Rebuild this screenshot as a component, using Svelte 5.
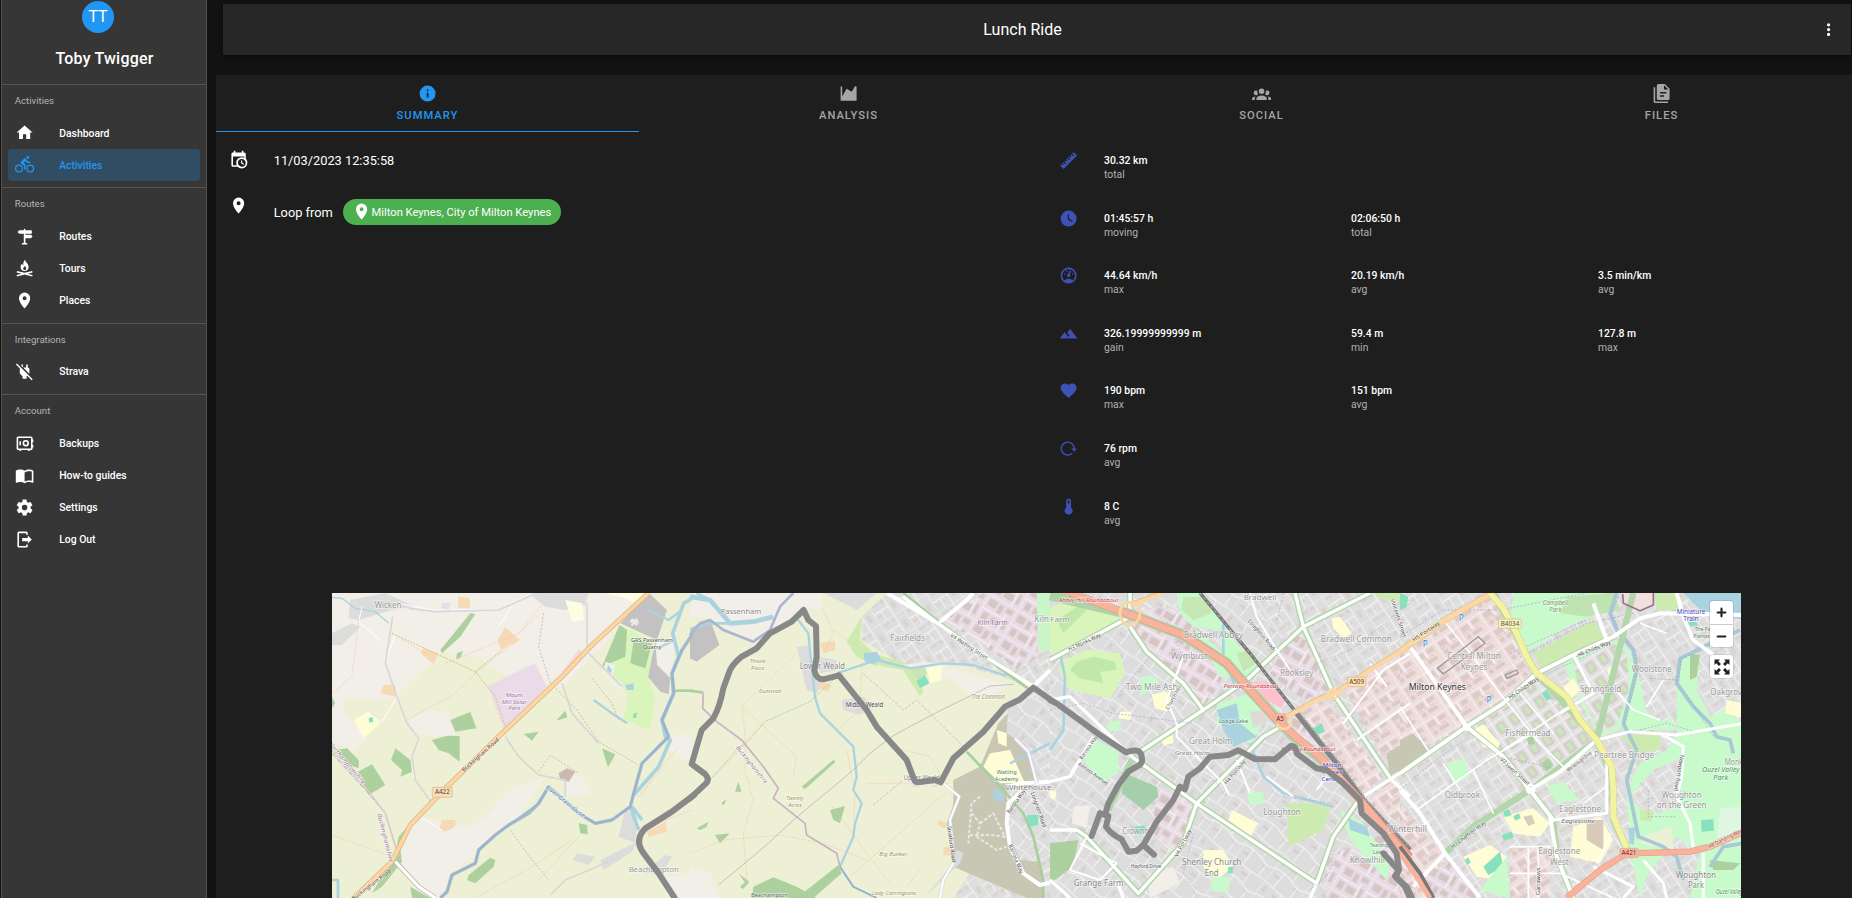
<script>
  const P = {
    home: 'M10,20V14H14V20H19V12H22L12,3L2,12H5V20H10Z',
    bike: 'M5,20.5A3.5,3.5 0 0,1 1.5,17A3.5,3.5 0 0,1 5,13.5A3.5,3.5 0 0,1 8.5,17A3.5,3.5 0 0,1 5,20.5M5,12A5,5 0 0,0 0,17A5,5 0 0,0 5,22A5,5 0 0,0 10,17A5,5 0 0,0 5,12M14.8,10H19V8.2H15.8L13.86,4.93C13.57,4.43 13,4.1 12.4,4.1C11.93,4.1 11.5,4.29 11.2,4.6L7.5,8.29C7.19,8.6 7,9 7,9.5C7,10.13 7.33,10.66 7.85,10.97L11.2,13V18H13V11.5L10.75,9.85L13.07,7.5M19,20.5A3.5,3.5 0 0,1 15.5,17A3.5,3.5 0 0,1 19,13.5A3.5,3.5 0 0,1 22.5,17A3.5,3.5 0 0,1 19,20.5M19,12A5,5 0 0,0 14,17A5,5 0 0,0 19,22A5,5 0 0,0 24,17A5,5 0 0,0 19,12M16,4.8C17,4.8 17.8,4 17.8,3C17.8,2 17,1.2 16,1.2C15,1.2 14.2,2 14.2,3C14.2,4 15,4.8 16,4.8Z',
    sign: 'M11,4V3L12,2L13,3V4H21V8.500H13V9.800H20L22,12L20,14.200H13V20H14.5C15.3,20 15.5,21 15.5,22H8.5C8.5,21 8.7,20 9.500,20H11V8.500H5.500L3,6.300L5.500,4H11Z',
    fire: 'M12.500,1C13,4 17,5.800 17,10C17,13 14.800,15 12,15C9,15 7,13 7,10C7,8 8,6.600 9,5.600C9.100,7 9.600,7.600 10.300,7.800C10.200,5 11,2.500 12.500,1M12.400,8.500C12,10 10.200,10.500 10.200,12C10.200,13.100 11,13.800 12,13.800C13.200,13.800 14,13 14,11.800C14,10.500 12.800,9.800 12.400,8.500M2.500,15L12,17.300L21.500,15L22,16.900L15.800,18.300L22,19.900L21.500,21.800L12,19.400L2.500,21.800L2,19.900L8.200,18.300L2,16.900Z',
    pin: 'M12,11.5A2.5,2.5 0 0,1 9.5,9A2.5,2.5 0 0,1 12,6.5A2.5,2.5 0 0,1 14.5,9A2.5,2.5 0 0,1 12,11.5M12,2A7,7 0 0,0 5,9C5,14.25 12,22 12,22C12,22 19,14.25 19,9A7,7 0 0,0 12,2Z',
    plug: 'M22.11 21.46L2.39 1.73L1.11 3L6.25 8.14C6.09 8.41 6 8.7 6 9V14.5L9.5 18V21H14.5V18L15.31 17.2L20.84 22.73L22.11 21.46M18 14.5V9C18 8 17 7 16 7V3H14V7H10.2L17.85 14.65L18 14.5M10 3H8V4.8L10 6.8V3Z',
    safe: 'M4,3H20A2,2 0 0,1 22,5V7H23V10H22V14H23V17H22V18A2,2 0 0,1 20,20H19V21H16V20H8V21H5V20H4A2,2 0 0,1 2,18V5A2,2 0 0,1 4,3M4,5V18H20V5H4M5.500,9H7.500V14H5.500V9M13.500,7.500A4,4 0 0,1 17.500,11.500A4,4 0 0,1 13.500,15.500A4,4 0 0,1 9.500,11.500A4,4 0 0,1 13.500,7.500M13.500,9.500A2,2 0 0,0 11.500,11.500A2,2 0 0,0 13.500,13.500A2,2 0 0,0 15.500,11.500A2,2 0 0,0 13.500,9.500Z',
    book: 'M12 21.5C10.65 20.65 8.2 20 6.5 20C4.85 20 3.15 20.3 1.75 21.05C1.65 21.1 1.6 21.1 1.5 21.1C1.25 21.1 1 20.85 1 20.6V6C1.6 5.55 2.25 5.25 3 5C4.11 4.65 5.33 4.5 6.5 4.5C8.45 4.5 10.55 4.9 12 6C13.45 4.9 15.55 4.5 17.5 4.5C18.67 4.5 19.89 4.65 21 5C21.75 5.25 22.4 5.55 23 6V20.6C23 20.85 22.75 21.1 22.5 21.1C22.4 21.1 22.35 21.1 22.25 21.05C20.85 20.3 19.15 20 17.5 20C15.8 20 13.35 20.65 12 21.5M12 8V19.5C13.35 18.65 15.8 18 17.5 18C18.7 18 19.9 18.15 21 18.5V7C19.9 6.65 18.7 6.5 17.5 6.5C15.8 6.5 13.35 7.15 12 8Z',
    cog: 'M12,15.5A3.5,3.5 0 0,1 8.5,12A3.5,3.5 0 0,1 12,8.5A3.5,3.5 0 0,1 15.5,12A3.5,3.5 0 0,1 12,15.5M19.43,12.97C19.47,12.65 19.5,12.33 19.5,12C19.5,11.67 19.47,11.34 19.43,11L21.54,9.37C21.73,9.22 21.78,8.95 21.66,8.73L19.66,5.27C19.54,5.05 19.27,4.96 19.05,5.05L16.56,6.05C16.04,5.66 15.5,5.32 14.87,5.07L14.5,2.42C14.46,2.18 14.25,2 14,2H10C9.75,2 9.54,2.18 9.5,2.42L9.13,5.07C8.5,5.32 7.96,5.66 7.44,6.05L4.95,5.05C4.73,4.96 4.46,5.05 4.34,5.27L2.34,8.73C2.21,8.95 2.27,9.22 2.46,9.37L4.57,11C4.53,11.34 4.5,11.67 4.5,12C4.5,12.33 4.53,12.65 4.57,12.97L2.46,14.63C2.27,14.78 2.21,15.05 2.34,15.27L4.34,18.73C4.46,18.95 4.73,19.03 4.95,18.95L7.44,17.94C7.96,18.34 8.5,18.68 9.13,18.93L9.5,21.58C9.54,21.82 9.75,22 10,22H14C14.25,22 14.46,21.82 14.5,21.58L14.87,18.93C15.5,18.67 16.04,18.34 16.56,17.94L19.05,18.95C19.27,19.03 19.54,18.95 19.66,18.73L21.66,15.27C21.78,15.05 21.73,14.78 21.54,14.63L19.43,12.97Z',
    logout: 'M16,17V14H9V10H16V7L21,12L16,17M14,2A2,2 0 0,1 16,4V6H14V4H5V20H14V18H16V20A2,2 0 0,1 14,22H5A2,2 0 0,1 3,20V4A2,2 0 0,1 5,2H14Z',
    info: 'M13,9H11V7H13M13,17H11V11H13M12,2A10,10 0 0,0 2,12A10,10 0 0,0 12,22A10,10 0 0,0 22,12A10,10 0 0,0 12,2Z',
    chart: 'M2,3H4V15.500L9.500,6L16,9.800L20.200,2.500L22,3.500V21H2V3Z',
    group: 'M12,5.5A3.5,3.5 0 0,1 15.5,9A3.5,3.5 0 0,1 12,12.5A3.5,3.5 0 0,1 8.5,9A3.5,3.5 0 0,1 12,5.5M5,8C5.56,8 6.08,8.15 6.53,8.42C6.38,9.85 6.8,11.27 7.66,12.38C7.16,13.34 6.16,14 5,14A3,3 0 0,1 2,11A3,3 0 0,1 5,8M19,8A3,3 0 0,1 22,11A3,3 0 0,1 19,14C17.84,14 16.84,13.34 16.34,12.38C17.2,11.27 17.62,9.85 17.47,8.42C17.92,8.15 18.44,8 19,8M5.5,18.25C5.5,16.18 8.41,14.5 12,14.5C15.59,14.5 18.5,16.18 18.5,18.25V20H5.5V18.25M0,20V18.5C0,17.11 1.89,15.94 4.45,15.6C3.86,16.28 3.5,17.22 3.5,18.25V20H0M24,20H20.5V18.25C20.5,17.22 20.14,16.28 19.55,15.6C22.11,15.94 24,17.11 24,18.5V20Z',
    files: 'M16 0H8C6.9 0 6 .9 6 2V18C6 19.1 6.9 20 8 20H20C21.1 20 22 19.1 22 18V6L16 0M15 16H10V14H15V16M18 12H10V10H18V12M15 7V1.5L20.5 7H15M4 4V22H20V24H4C2.9 24 2 23.1 2 22V4H4Z',
    calendar: 'M15,13H16.5V15.82L18.94,17.23L18.19,18.53L15,16.69V13M19,8H5V19H9.67C9.24,18.09 9,17.07 9,16A7,7 0 0,1 16,9C17.07,9 18.09,9.24 19,9.67V8M5,21C3.89,21 3,20.1 3,19V5C3,3.89 3.89,3 5,3H6V1H8V3H16V1H18V3H19A2,2 0 0,1 21,5V11.1C22.24,12.36 23,14.09 23,16A7,7 0 0,1 16,23C14.09,23 12.36,22.24 11.1,21H5M16,11.15A4.85,4.85 0 0,0 11.15,16C11.15,18.68 13.32,20.85 16,20.85A4.85,4.85 0 0,0 20.85,16C20.85,13.32 18.68,11.15 16,11.15Z',
    ruler: 'M1.39,18.36L3.16,16.6L4.58,18L5.64,16.95L4.22,15.54L5.64,14.12L8.11,16.6L9.17,15.54L6.7,13.06L8.11,11.65L9.53,13.06L10.59,12L9.17,10.59L10.59,9.17L13.06,11.65L14.12,10.59L11.65,8.11L13.06,6.7L14.47,8.11L15.54,7.05L14.12,5.64L15.54,4.22L18,6.7L19.07,5.64L16.6,3.16L18.36,1.39L22.61,5.64L5.64,22.61L1.39,18.36Z',
    clock: 'M12,2A10,10 0 0,0 2,12A10,10 0 0,0 12,22A10,10 0 0,0 22,12A10,10 0 0,0 12,2M16.2,16.2L11,13V7H12.5V12.2L17,14.9L16.2,16.2Z',
    gauge: 'M12,2A10,10 0 0,0 2,12A10,10 0 0,0 12,22A10,10 0 0,0 22,12A10,10 0 0,0 12,2M12,4A8,8 0 0,1 20,12C20,14.4 19,16.5 17.3,18C15.9,16.7 14,16 12,16C10,16 8.2,16.7 6.7,18C5,16.5 4,14.4 4,12A8,8 0 0,1 12,4M14,5.89C13.62,5.9 13.26,6.15 13.1,6.54L11.81,9.77L11.71,10C11,10.13 10.41,10.6 10.14,11.26C9.73,12.29 10.23,13.45 11.26,13.86C12.29,14.27 13.45,13.77 13.86,12.74C14.12,12.08 14,11.32 13.57,10.76L13.67,10.5L14.96,7.29L14.97,7.26C15.17,6.75 14.92,6.17 14.41,5.96C14.28,5.91 14.15,5.89 14,5.89M10,6A1,1 0 0,0 9,7A1,1 0 0,0 10,8A1,1 0 0,0 11,7A1,1 0 0,0 10,6M7,9A1,1 0 0,0 6,10A1,1 0 0,0 7,11A1,1 0 0,0 8,10A1,1 0 0,0 7,9M17,9A1,1 0 0,0 16,10A1,1 0 0,0 17,11A1,1 0 0,0 18,10A1,1 0 0,0 17,9Z',
    hills: 'M14,6L10.25,11L13.1,14.8L11.5,16C9.81,13.75 7,10 7,10L1,18H23L14,6Z',
    heart: 'M12,21.35L10.55,20.03C5.4,15.36 2,12.27 2,8.5C2,5.41 4.42,3 7.5,3C9.24,3 10.91,3.81 12,5.08C13.09,3.81 14.76,3 16.5,3C19.58,3 22,5.41 22,8.5C22,12.27 18.6,15.36 13.45,20.03L12,21.35Z',
    cadence: 'M11,3A9,9 0 0,1 19.900,12H22.500L19,16L15.300,12H18.100A7.200,7.200 0 1,0 15.800,17.300L17.100,18.600A9,9 0 1,1 11,3Z',
    thermo: 'M15,13V5A3,3 0 0,0 9,5V13A5,5 0 1,0 15,13M12,4A1,1 0 0,1 13,5V8H11V5A1,1 0 0,1 12,4Z',
    dots: 'M12,16A2,2 0 1,1 12,20A2,2 0 1,1 12,16M12,10A2,2 0 1,1 12,14A2,2 0 1,1 12,10M12,4A2,2 0 1,1 12,8A2,2 0 1,1 12,4Z'
  };

  const nav = [
    { title: 'Activities', items: [['Dashboard', 'home'], ['Activities', 'bike', true]] },
    { title: 'Routes', items: [['Routes', 'sign'], ['Tours', 'fire'], ['Places', 'pin']] },
    { title: 'Integrations', items: [['Strava', 'plug']] },
    { title: 'Account', items: [['Backups', 'safe'], ['How-to guides', 'book'], ['Settings', 'cog'], ['Log Out', 'logout']] }
  ];
  const tabs = [['Summary', 'info'], ['Analysis', 'chart'], ['Social', 'group'], ['Files', 'files']];
  const stats = [
    ['ruler', [['30.32 km', 'total']]],
    ['clock', [['01:45:57 h', 'moving'], ['02:06:50 h', 'total']]],
    ['gauge', [['44.64 km/h', 'max'], ['20.19 km/h', 'avg'], ['3.5 min/km', 'avg']]],
    ['hills', [['326.19999999999 m', 'gain'], ['59.4 m', 'min'], ['127.8 m', 'max']]],
    ['heart', [['190 bpm', 'max'], ['151 bpm', 'avg']]],
    ['cadence', [['76 rpm', 'avg']]],
    ['thermo', [['8 C', 'avg']]]
  ];

  // Map is drawn in four west-to-east sheets; each sheet keeps its own origin.
  const sheets = [
    {
      x: 0,
      areas: [
        ['#f2efe9', '0,9 960,9 800,180 690,290 650,290 610,220 530,260 440,200 330,185 180,330 30,325 40,375 110,440 60,490 0,450'],
        ['#f2efe9', '225,390 290,360 350,365 375,435 300,440 250,425'],
        ['#f2efe9', '265,680 410,715 460,680 530,600 640,560 560,680 480,735 440,790 355,850 330,924 300,924 200,815 230,730'],
        ['#f2efe9', '700,570 740,545 780,610 700,620'],
        ['#f2efe9', '975,150 1030,150 1020,260 970,220'],
        ['#f2efe9', '1010,440 1080,430 1080,520 1010,480'],
        ['#dddcdc', '0,130 60,100 85,110 30,165 0,165'], ['#dddcdc', '55,30 160,9 250,50 180,60 80,90 50,85'],
        ['#dddcdc', '590,9 770,9 760,45 700,60 640,50'],
        ['#fefde0', '700,30 750,40 757,90 720,97'], ['#fefde0', '820,9 940,9 905,38 880,25'],
        ['#c4c1c2', '950,9 1005,60 975,150 865,100'], ['#c4c1c2', '970,150 975,225 1015,265 1010,313 985,305 948,260'],
        ['#d9f5bb', '865,105 965,155 948,260 970,320 955,420 875,390 890,310 810,235'],
        ['#add19e', '862,105 885,120 880,200 810,230'], ['#add19e', '905,150 960,160 940,235 895,220'],
        ['#f2efe9', '820,215 850,225 840,270 870,275 875,300 845,285 815,250'], ['#aad3df', '880,285 905,280 905,300 885,300'], ['#aad3df', '828,225 840,240 835,250 825,240'], ['#88e0be', '905,370 915,368 912,385 903,383'],
        ['#add19e', '415,70 430,72 385,140 330,190 325,180'], ['#add19e', '375,190 393,183 385,205 372,208'],
        ['#f6d9b5', '378,18 413,25 413,55 378,53'], ['#f6d9b5', '520,112 563,150 508,180 497,150'],
        ['#f6d9b5', '275,175 320,190 305,222 265,190'], ['#f6d9b5', '155,285 190,285 192,320 145,310'],
        ['#f6d9b5', '330,690 370,690 370,710 340,725 322,715'],
        ['#ebdbe8', '330,38 356,40 350,65 328,58'], ['#ebdbe8', '468,288 608,220 645,290 515,418'],
        ['#f4dadb', '740,178 755,185 700,250 690,245'],
        ['#fefdd5', '65,390 110,365 145,400 95,443'], ['#88e0be', '110,385 122,380 124,395 112,398'],
        ['#add19e', '355,390 415,366 433,415 370,425'], ['#add19e', '300,450 345,437 383,438 383,515 350,490 320,480'],
        ['#add19e', '190,475 235,510 240,545 205,560 210,540 177,510'], ['#add19e', '15,480 45,475 80,510 80,535 50,525'],
        ['#add19e', '78,545 120,523 160,585 110,615'], ['#add19e', '672,392 700,362 706,382'],
        ['#add19e', '575,432 620,425 600,452'], ['#add19e', '810,475 850,493 828,532'],
        ['#add19e', '235,700 205,780 210,815 150,890 120,910 190,790 200,740'], ['#add19e', '410,855 475,803 490,810 485,830 430,880 405,870'],
        ['#add19e', '740,700 765,705 767,733 745,730'], ['#add19e', '0,320 10,340 0,355'], ['#add19e', '235,890 295,924 240,924'],
        ['#dddcdc', '880,660 915,680 910,760 860,740'], ['#dddcdc', '805,810 915,755 900,785 815,840'],
        ['#dddcdc', '735,790 790,800 770,825 722,810'], ['#f6d9b5', '945,725 1000,695 1005,725 950,740'],
        ['#c9b9b0', '680,550 705,535 730,545 710,575 685,570'],
        ['#dddcdc', '930,850 1000,795 1020,800 990,850'], ['#f2efe9', '1000,860 1080,855 1080,924 1000,924']
      ],
      lines: [
        ['#aad3df', 4, 'M0,22 30,25 70,55 130,65 170,100'], ['#aad3df', 8, 'M0,870H18V924'],
        ['#fff', 3, 'M90,50 80,95 150,155M190,130 160,220 195,320 225,400 260,440 240,500 245,560 300,640M195,320 150,395 100,370M600,9 500,60 300,60 200,40M500,110 540,50M265,680 330,720'],
        ['#d9d6d6', 5, 'M182,80 160,220 195,320 225,400 260,445 240,500 250,570 300,640M230,55 310,65 500,60 600,15M520,440 560,500 620,555 700,570M770,190 840,260 870,290M765,40 765,180M690,280 720,370 800,460M700,570 700,620M655,915 700,870 830,815'],
        ['#f4c3b3', 3, 'M80,90 60,260 0,310M180,130 280,190M560,150 440,240 370,310 225,390M560,130 625,70M640,30 560,130 340,220M930,620 1010,470M920,620 1000,520 1040,470M900,730 1080,660M720,750 600,830 430,924M0,735 180,800M740,740 620,870M950,700 1080,610', '3 4'],
        ['#c6bfb8', 3, 'M635,70 620,170 655,280M655,280 735,360 800,455 920,525M620,545 655,495 740,550M780,265 840,340 860,390M535,720 600,810 650,870', '6 5'],
        ['#d9c36c', 3, 'M430,245 490,320 520,410M180,130 430,245 510,180', '6 4'],
        ['#add19e', 8, 'M1020,302H1080'],
        ['#aad3df', 7, 'M785,330 840,370 885,400M950,60 1010,90 1050,60M975,175 1030,150'],
        ['#aad3df', 11, 'M1080,25 1055,40 1022,130 1040,200 1020,250 1025,310 990,390 1000,440 1015,450 980,530 905,615M895,650 920,720M900,650 930,690'],
        ['#a9b6ce', 10, 'M1080,135 1050,180 1020,250 1025,310 990,390 1010,440 930,520 905,610 895,650 840,690 790,700 740,670 650,590 620,640 590,670 530,705 490,735 440,780 430,820 360,855 345,905 325,924'],
        ['#8fb8cf', 4, 'M1050,180 1020,250 1025,310 990,390 1010,440 930,520 905,610 895,650 840,690 790,700 740,670 650,590 620,640 530,705 490,735 440,780 430,820 360,855 345,905 325,924'],
        ['#a99dab', 3, 'M0,490 110,610 160,670 200,800', '14 4 3 4'], ['#d9cbd5', 5, 'M0,480 110,605 160,670 200,800'],
        ['#b6aba4', 14, 'M190,815 260,890 310,924'], ['#fff', 10, 'M190,815 260,890 310,924'],
        ['#d9b078', 15, 'M950,9 780,165 690,260 500,440 330,605 235,705 180,815 65,924'],
        ['#fcd6a4', 11, 'M950,9 780,165 690,260 500,440 330,605 235,705 180,815 65,924']
      ],
      labels: [
        [168, 53, 'Wicken', 25, '#999', 0, 80], [960, 155, 'GRS Passenham', 18, '#555', 0, 126], [960, 176, 'Quarry', 18, '#555', 0, 56],
        [547, 320, 'Mount', 18, '#a070a0', 0, 52, 1], [547, 341, 'Mill Solar', 18, '#a070a0', 0, 76, 1], [547, 361, 'Park', 18, '#a070a0', 0, 36, 1],
        [445, 500, 'Buckingham Road', 17, '#5b3f1c', -42, 142], [118, 890, 'Buckingham Road', 17, '#5b3f1c', -37, 142],
        [45, 525, 'Northamptonshire', 18, '#a080a0', 50, 160, 1], [160, 750, 'Buckinghamshire', 18, '#a080a0', 76, 150, 1],
        [700, 640, 'River Great Ouse', 17, '#5d84b5', 38, 145, 1], [965, 845, 'Beachampton', 23, '#999', 0, 150], [905, 104, '⚒', 24, '#eee', 0, 24]
      ],
      shields: [[301, 592, 60, 30, 'A422', '#f8deba', '#5b3f1c']]
    },
    {
      x: 1074,
      areas: [
        ['#f2efe9', '0,9 400,9 390,60 340,50 240,130 200,160 130,130 80,95 0,60'], ['#c4c1c2', '0,115 60,88 88,165 20,215 0,205'],
        ['#f2efe9', '0,830 60,850 90,924 0,924'],
        ['#f2efe9', '0,9 0,80 60,85 190,155 200,120 100,50'],
        ['#dddcdc', '320,170 360,165 365,260 400,270 380,310 350,300 340,260 330,210'], ['#dddcdc', '380,200 440,210 440,240 390,250'],
        ['#dddcdc', '455,330 520,320 550,350 510,375 460,360'], ['#dddcdc', '650,505 690,500 750,560 740,590 670,590'],
        ['#f6d9b5', '390,160 435,152 435,180 400,190'], ['#f6d9b5', '395,275 425,285 415,305 385,295'],
        ['#f6d9b5', '745,690 775,700 765,715 742,705'], ['#f6d9b5', '760,770 785,770 785,797 760,795'],
        ['#f6d9b5', '865,350 890,365 880,378 860,365'], ['#f6d9b5', '810,600 832,600 825,620 808,615'],
        ['#add19e', '335,590 430,510 437,515 370,575 345,597'], ['#add19e', '420,660 465,648 450,700 430,690'],
        ['#add19e', '145,575 155,605 135,605'], ['#add19e', '20,715 55,695 50,710 30,720'], ['#add19e', '75,735 120,730 90,760'],
        ['#add19e', '185,924 190,890 250,862 320,890 380,924'], ['#add19e', '320,924 445,825 455,850 370,924'],
        ['#add19e', '145,850 178,875 160,897 150,890 165,877'], ['#add19e', '95,640 108,627 105,640 98,645'],
        ['url(#st1)', '515,80 590,9 1080,9 1080,924 790,924 1000,600 930,400 960,340 1030,290 800,220 640,225 515,150'],
        ['#dddcdc', '400,9 560,9 500,60'],
        ['#cdebb0', '470,155 515,80 510,150 550,190 680,230 700,310 685,320 600,250 500,200'],
        ['#f2efe9', '640,225 710,215 760,225 800,240 960,285 860,340 790,270'],
        ['#edf0d5', '560,225 640,240 690,320 740,290 880,330 960,340 930,400 830,490 750,580 700,600 560,460'],
        ['#aad3df', '520,190 560,185 575,210 550,222 525,215'],
        ['#c9e5b8', '665,240 700,225 712,250 685,270'],
        ['#fefdd5', '710,235 755,225 755,270 720,280'], ['#88e0be', '680,272 705,255 718,280 690,295'],
        ['#ebdbe8', '880,9 1045,9 1045,200 985,240 860,150 770,100 750,90'],
        ['#c9f5c8', '1040,9 1080,9 1080,185 1045,180'],
        ['#c7c7b4', '925,400 980,345 1040,380 1030,440 1000,440 1035,580 1000,620 1040,740 1060,924 1010,924 790,830 770,700 820,560 870,530'],
        ['#c7c7b4', '790,570 880,525 980,620 1000,690 1060,860 1060,924 950,890 790,825'],
        ['url(#st2)', '955,350 1080,300 1080,460 1030,480 950,430'],
        ['#fefdd5', '900,490 960,480 1005,580 930,580 880,530'], ['#fefdd5', '920,420 950,430 950,470 925,460'],
        ['#dddcdc', '700,925 790,820 800,780 820,790 810,820'],
        ['url(#st2)', '950,600 1080,580 1080,790 1040,815 990,810 955,730'],
        ['#88e0be', '1010,675 1045,675 1045,705 1015,710'], ['#aad3df', '905,605 920,598 943,615 938,637 915,630']
      ],
      lines: [
        ['#aad3df', 14, 'M0,20 60,30 120,100 190,95 250,80'], ['#aad3df', 8, 'M60,30 20,9M120,100 60,100 0,120'],
        ['#a9b6ce', 8, 'M0,135 30,100 60,90 100,120 190,155 240,120 270,50 310,9'],
        ['#aad3df', 7, 'M325,90 355,130 365,230 375,320 390,370 440,420 490,470 500,560 490,600 515,640 495,700 490,740 450,830M440,250 560,210 660,235 760,220 850,225 940,255 970,250M1080,460 960,520'],
        ['#add19e', 8, 'M0,302 40,308'],
        ['#f4c3b3', 3, 'M155,350 165,430 165,540 190,630 160,730 170,870M155,350 320,190M155,350 320,500 310,560M60,570 200,430M0,790 100,750 270,735 400,760 530,810M400,60 430,130 400,190M430,120 500,170M440,420 510,360 515,220M470,480 495,610 490,690M770,605 640,720 480,860M530,580 780,580M600,470 720,500 760,570M430,650 530,790 600,880M650,890 690,840', '3 4'],
        ['#abc89e', 3, 'M155,470 225,395 360,335 440,260M50,580 160,460', '5 4'],
        ['#c9c4ac', 3, 'M520,250 640,360 680,330 830,480M550,645 640,570', '8 5'],
        ['#aaa', 2, 'M85,885 170,815 235,760 305,695 360,648 425,595 490,540 540,490 605,440 665,407 750,362 840,318 900,288 970,283'],
        ['#c9b1c4', 5, 'M40,310 38,355 80,395 155,450 220,530 265,595 250,625 345,700 350,735 440,790 450,830 490,890 560,924'],
        ['#8fb4cc', 5, 'M450,830 490,890 560,924'],
        ['#fff', 12, 'M640,20 745,100 900,210 1030,290M745,100 830,30 850,9M1030,290 1080,240M950,590 1000,580 1080,575M590,9 745,100'],
        ['#a8cfa0', 8, 'M640,9 740,90 1000,285M760,110 1020,300M830,485 940,600 1000,670 1030,740 1060,870 1060,924'],
        ['#fff', 9, 'M640,20 745,100 900,210 1030,290M745,100 830,30 850,9M1030,290 1080,240'],
        ['#fff', 12, 'M1000,600 955,640 950,700 960,770 1000,850 1050,885 1080,878'],
        ['#d9d9d9', 10, 'M760,580 808,620 780,690 790,790M790,820 760,870 750,924'], ['#fff', 6, 'M760,580 808,620 780,690 790,790M790,820 760,870 750,924'],
        ['#dadaed', 12, 'M975,445 1015,485 1030,520 1040,580'], ['#fff', 5, 'M975,445 1015,485 1040,580'],
        ['#e8e8e8', 6, 'M870,620 845,640 835,760M845,670 870,700 860,740 920,780 950,770M870,700 910,670 945,740 900,735 835,735', '10 6']
      ],
      labels: [
        [153, 73, 'Passenham', 23, '#888', 0, 122], [203, 219, 'Thistle', 18, '#999a58', 0, 48, 1], [203, 239, 'Piece', 18, '#999a58', 0, 40, 1],
        [240, 309, 'Dunstead', 18, '#999a58', 0, 66, 1], [397, 236, 'Lower Weald', 24, '#888', 0, 136], [523, 351, 'Middle Weald', 19, '#444', 0, 112],
        [653, 154, 'Fairfields', 24, '#999', 0, 104], [908, 105, 'Kiln Farm', 20, '#a070a0', 0, 90], [1055, 96, 'Kiln', 24, '#999', 0, 44],
        [838, 175, 'V4 Watling Street', 16, '#555', 33, 130], [894, 327, 'The Common', 19, '#999a58', 0, 100, 1],
        [695, 569, 'Upper Weald', 20, '#888', 0, 108], [315, 630, 'Twenty', 18, '#999a58', 0, 52, 1], [315, 650, 'Acres', 18, '#999a58', 0, 40, 1],
        [610, 798, 'Big Bunker', 18, '#999a58', 0, 84, 1], [185, 530, 'Buckinghamshire', 18, '#a080a0', 51, 140, 1], [950, 552, 'Watling', 17, '#3f7f66', 0, 60], [950, 572, 'Academy', 17, '#3f7f66', 0, 70],
        [1016, 599, 'Whitehouse', 23, '#888', 0, 138], [785, 768, 'Stratford Road', 17, '#444', 82, 108], [978, 640, 'Barrosa Way', 17, '#444', -55, 85], [978, 812, 'Barrosa Way', 17, '#444', 67, 92],
        [1046, 665, 'Longhorn Road', 17, '#444', 70, 110], [238, 920, 'Beachampton', 18, '#666', 0, 110], [612, 915, 'Lady Carringtons', 18, '#999a58', 0, 132, 1]
      ],
      shields: []
    },
    {
      x: 2154,
      areas: [
        ['url(#st2)', '0,9 1080,9 1080,924 0,924'], ['url(#st1)', '600,9 1080,9 1080,300 800,300'],
        ['#d9f5bb', '0,55 90,9 210,70 200,110 30,190 0,190'], ['#d9f5bb', '40,210 110,180 210,190 225,250 180,325 60,300 25,240'],
        ['#c0e8a8', '80,215 130,200 195,215 200,240 150,245 160,280 90,265 60,240'], ['#c0e8a8', '20,90 90,45 110,60 40,130'],
        ['#ebdbe8', '250,50 410,60 540,250 460,350 370,245 250,130'], ['#ebdbe8', '330,590 440,640 390,790 300,730'],
        ['#ebdbe8', '700,130 800,150 840,300 760,330 660,250'], ['#ebdbe8', '830,800 1080,700 1080,924 830,924'],
        ['#c9facc', '380,9 450,9 560,160 640,240 570,270 520,250 510,120 430,110 390,70'], ['#c6e6b4', '400,20 470,20 485,70 430,90 395,60'],
        ['#c9facc', '505,340 600,310 690,360 640,400 600,460 500,400'], ['#aad3df', '500,360 560,340 570,400 620,440 550,470 520,420'],
        ['#ffc0cb', '600,275 650,275 705,330 695,355 650,330'], ['#c6e6b4', '560,190 605,180 625,215 580,245'],
        ['#fefdd5', '305,315 345,303 365,325 350,365 315,355'], ['#fefdd5', '845,85 870,80 905,130 880,145 850,115'],
        ['#fefdd5', '210,365 245,365 240,390 205,385'], ['#fefdd5', '335,445 370,435 370,460 340,465'],
        ['#c9facc', '135,450 205,480 205,550 150,580 95,500'], ['#a5cfab', '215,545 320,590 325,620 280,660 215,610'],
        ['#fefdd5', '545,660 625,700 600,740 535,690'], ['#c9facc', '590,610 640,605 640,640 600,645'],
        ['#cdebb0', '710,640 845,640 820,720 715,770'], ['#add19e', '0,760 85,750 70,830 0,880'],
        ['#fefdd5', '460,780 520,780 550,830 500,870 460,830'], ['#c9facc', '485,860 540,860 535,905 485,905'],
        ['#f2efe9', '70,650 120,645 110,715 65,700'], ['#f2efe9', '290,860 370,830 390,880 300,924'],
        ['#c9facc', '870,660 940,700 1020,820 1010,870 900,750'], ['#aad3df', '895,685 950,710 960,740 900,720'], ['#ebdbe8', '700,380 820,380 920,590 880,590'],
        ['#f4dddd', '740,350 830,330 1000,560 930,620'], ['#f4dddd', '880,290 1080,180 1080,500 1010,520'],
        ['#f4dddd', '1080,570 1080,720 950,640 1010,580'],
        ['#88e0be', '790,415 815,400 825,425 800,435'], ['#c7c7b4', '1010,490 1080,450 1080,530 1020,555'],
        ['#88e0be', '255,710 290,705 275,735 250,730'], ['#cdebb0', '970,9 1080,9 1080,40 1000,30'],
        ['#c9facc', '430,110 520,190 530,270 510,260'], ['#c9facc', '170,400 210,390 215,420 175,425'],
        ['#c9facc', '270,265 300,255 330,275 270,320'], ['#fefdd5', '0,600 20,605 15,630 0,625'], ['#88e0be', '535,830 550,830 548,850 533,850'],
        ['#e0dad6', '600,365 650,360 670,385 610,415']
      ],
      lines: [
        ['#aad3df', 8, 'M30,190 45,260 40,420 0,480M520,100 520,200 560,300M600,460 640,560 700,610 850,650'],
        ['#b4d6ab', 19, 'M240,9V80L0,210M240,110 290,185 400,280 460,360 270,485M460,360 590,270 760,110 960,9M440,640 560,520 640,440 710,400M735,9 760,110 850,310 1025,570M245,500 440,640 800,880M440,640 400,760 265,910 110,740 80,720M175,660 250,500M800,880 850,740 930,625'],
        ['#fff', 10, 'M240,9V80L0,210M240,110 290,185 400,280 460,360 270,485M460,360 590,270 760,110 960,9M440,640 560,520 640,440 710,400M735,9 760,110 850,310 1025,570M245,500 440,640 800,880M440,640 400,760 265,910 110,740 80,720M0,720H80M850,740 800,880 780,924M850,740 930,625 1080,530M1025,570 1080,620M245,500 60,320 0,330M0,575 60,560 130,440M0,870 60,924M200,870 220,924'],
        ['#fff', 6, 'M380,400V440L520,580 540,620M380,400 350,330 400,200M600,9 620,80 680,180 720,240M110,740 60,840 150,870 200,820 90,760M960,220 1010,290M880,400 1000,240 1080,190M920,450 1080,340M790,340 850,300M650,560 730,620M560,510 600,610M800,600 830,560'],
        ['#a7a7e0', 2, 'M0,360 100,340 190,370 270,380 430,400M300,200 200,320M400,200 350,100 390,60M540,620 480,560M850,780 840,850 780,900M430,730 400,850 440,900M700,620 850,640M700,9 680,100M1080,40 900,180 800,220', '6 5'],
        ['#777', 10, 'M450,9 600,190 740,370 860,520 940,630 1020,740 1080,800'], ['#bbb', 3, 'M450,9 600,190 740,370 860,520 940,630 1080,800', '9 8'],
        ['#858585', 16, 'M740,370 860,520 940,630 1080,780'], ['#aaa', 5, 'M750,370 870,520 950,630 1080,770', '8 6'],
        ['#b0d2a8', 32, 'M0,15 230,70 400,135 530,220 600,300 730,440 830,520'],
        ['#e39a80', 23, 'M60,9 230,70 400,135 530,220 600,300 690,400 820,510 930,630 1080,800'],
        ['#f9b29c', 20, 'M40,0 230,70 400,135 530,220 600,300 690,400 820,510 930,630 1080,810'],
        ['#fcd6a4', 14, 'M240,45 340,9M710,380 800,330 850,312 960,240 1080,165'],
        ['#d9b078', 2, 'M240,38 340,2M710,372 800,322 850,304 960,232 1080,157'],
        ['#fcd6a4', 8, 'M210,70a30,34 0 1,0 60,0a30,34 0 1,0 -60,0M680,395a22,22 0 1,0 44,0a22,22 0 1,0 -44,0M835,312a14,14 0 1,0 28,0a14,14 0 1,0 -28,0']
      ],
      labels: [
        [116, 35, 'Abbey Hill Roundabout', 17, '#c44a4a', 0, 178, 1], [30, 96, 'Farm', 23, '#999', 0, 58], [103, 162, 'H3 Monks Way', 17, '#444', -25, 105],
        [490, 145, 'Bradwell Abbey', 24, '#999', 0, 178], [420, 208, 'Wymbush', 24, '#999', 0, 114], [630, 31, 'Bradwell', 23, '#999', 0, 98],
        [740, 259, 'Rooksley', 24, '#999', 0, 100], [919, 155, 'Bradwell Common', 24, '#999', 0, 213], [305, 300, 'Two Mile Ash', 24, '#999', 0, 156],
        [603, 293, 'Portway Roundabout', 17, '#c43a4a', 0, 164, 1], [550, 400, 'Lodge Lake', 17, '#4d8060', 0, 88], [482, 463, 'Great Holm', 24, '#999', 0, 130],
        [427, 494, 'Great Holm', 18, '#888', 0, 106, 1], [775, 483, 'Portway Roundabout', 17, '#c43a4a', 0, 164, 1], [635, 140, 'Loughton Road', 17, '#555', 50, 115],
        [1046, 90, 'Vincents Street', 17, '#555', 72, 120], [370, 328, 'Church Hill', 16, '#555', -60, 80], [846, 531, 'Milton', 17, '#4040c8', 0, 56], [846, 552, 'Keynes', 17, '#4040c8', 0, 60], [846, 573, 'Central', 17, '#4040c8', 0, 62],
        [554, 552, 'H4 Portway', 16, '#555', -50, 90], [115, 478, 'Barrosa Way', 16, '#555', -55, 82], [130, 556, 'Kinross Avenue', 16, '#444', 35, 105],
        [696, 674, 'Loughton', 25, '#999', 0, 112], [265, 732, 'Crownhill', 24, '#999', 0, 95], [398, 765, 'V4 Portway', 16, '#555', -62, 90],
        [485, 826, 'Shenley Church', 24, '#888', 0, 178], [485, 858, 'End', 24, '#888', 0, 42], [146, 888, 'Grange Farm', 24, '#888', 0, 150],
        [952, 819, 'Knowlhill', 24, '#999', 0, 106], [990, 771, 'Teardrop', 17, '#4d9060', 0, 60], [990, 791, 'Lakes', 17, '#4d9060', 0, 44], [288, 835, 'Hayford Drive', 16, '#555', 0, 90]
      ],
      shields: [[672, 371, 36, 28, 'A5', '#f6b4a4', '#6b2620'], [893, 262, 54, 28, 'A509', '#fbe0b4', '#5b3f1c']]
    },
    {
      x: 3204,
      areas: [
        ['url(#st1)', '0,9 1030,9 1030,924 0,924'],
        ['#f4dddd', '0,180 130,90 280,20 400,270 320,330 200,410 0,500'], ['#f4dddd', '0,640 130,790 80,924 0,924'],
        ['#c7c7b4', '0,450 40,430 90,490 0,540'], ['url(#st3)', '320,350 420,260 490,300 580,450 480,550 380,590 310,490 230,400'],
        ['#c9facc', '340,9 620,9 600,70 500,110 380,190 330,100'], ['#c0e3b2', '500,20 640,9 660,60 560,80 480,70'],
        ['#aad3df', '850,9 1030,9 1030,90 900,60'], ['#cdebb0', '760,9 830,9 835,60 770,60'], ['#f2e0e0', '670,9 760,9 760,45 720,62 668,40'],
        ['#cdebb0', '400,190 580,90 620,150 500,200 430,240'],
        ['#c9facc', '490,210 650,150 690,180 700,300 660,420 600,440 520,300'], ['url(#st3)', '520,220 640,160 680,190 690,290 650,410 600,430 540,310'],
        ['#c9facc', '700,180 760,280 830,420 670,420'], ['#c9facc', '830,190 910,200 900,300 1030,400 1030,924 720,924 690,780 680,600 720,520 800,480 830,430'],
        ['url(#st1)', '720,90 850,80 860,170 830,270 800,400 740,370 700,180'], ['url(#st1)', '900,200 1030,180 1030,330 930,380 890,300'],
        ['#fefdd5', '980,330 1030,340 1030,385 975,370'],
        ['url(#st1)', '760,540 850,500 840,650 740,680 690,620'], ['url(#st1)', '830,740 900,790 870,924 720,924 740,860'],
        ['#cdebb0', '665,440 780,425 780,480 710,490'], ['#dff6e0', '960,655 1030,650 1030,720 950,745'],
        ['#88e0be', '903,690 940,688 942,722 905,725'], ['#ecf0d4', '730,740 815,710 820,780 720,760'],
        ['#cdebb0', '720,660 760,660 755,695 720,690'],
        ['#fefdd5', '490,290 520,265 540,300 510,330'], ['#88e0be', '425,310 440,300 455,325 440,332'], ['#fefdd5', '620,240 640,225 650,250 630,262'],
        ['#fefdd5', '220,420 250,403 300,460 290,485 250,470'], ['#c9facc', '140,520 195,505 210,560 160,585'], ['#add19e', '425,520 445,505 460,525 440,545'],
        ['#fefdd5', '505,555 580,525 590,550 520,580'], ['url(#st1)', '400,600 620,480 620,680 460,690'],
        ['#c9facc', '440,590 490,575 540,630 470,640'], ['#fefdd5', '310,680 400,655 450,700 420,740 340,730'],
        ['#d9cbbc', '370,680 395,675 405,700 385,708'],
        ['#88e0be', '310,665 325,657 335,675 315,682'], ['#88e0be', '340,678 357,670 362,685 345,692'], ['#88e0be', '305,735 335,725 342,742 312,752'],
        ['#fefdd5', '190,800 270,765 320,800 300,870 230,860'], ['#88e0be', '250,830 300,785 310,830 265,855'], ['#88e0be', '195,810 205,802 212,818 200,824'],
        ['#ebdbe8', '80,870 150,800 240,924 100,924'], ['#fefdd5', '520,710 600,680 640,750 600,820 510,800'], ['#d9cbbc', '560,690 610,690 610,780 560,750'],
        ['#f0d8d8', '330,775 450,775 450,924 330,924'], ['#f4dddd', '330,775 450,775 450,924 330,924'],
        ['#c9facc', '240,900 320,800 330,924'], ['#add19e', '870,190 900,195 890,260 870,270'], ['#88e0be', '0,9 25,20 20,50 0,60'],
        ['#add19e', '930,810 1020,820 1000,840 940,840'], ['#88e0be', '860,97 890,95 892,107 862,110'], ['#aad3df', '685,715 705,712 702,765 688,760'],
        ['#add19e', '380,440 400,440 405,460 385,465']
      ],
      lines: [
        ['#a8c8d4', 11, 'M650,9 630,70 650,120 700,180 710,240 670,400 710,480 680,570 695,640 715,740 790,770 830,800 850,870M1020,120 900,175 840,205 830,280 880,350 930,400 950,440 990,450 1000,490M1030,760 970,770 930,830'],
        ['#99a0cc', 2, 'M655,20 635,70 655,120 705,180 715,240 675,400M910,180 845,205 835,280 885,350 940,440M0,140 130,60 300,60 560,9M360,200 560,100 700,70M200,410 400,270 640,160M330,190 560,90M310,500 480,540 590,450 800,400 900,430M720,580 745,600 745,680 830,680M750,265 830,270M0,600 120,500 210,440', '6 5'],
        ['#b4d6ab', 19, 'M0,550 200,410 310,340 410,250 520,195 640,140M200,410 310,500 390,600 460,690 470,800 520,924M135,790 220,710 390,600 590,450 700,9M280,9 410,250 590,450 635,560 640,690 680,780'],
        ['#fff', 12, 'M0,550 200,410 310,340 410,250 520,195 640,140 720,85 780,70 1030,75M30,170 200,410M200,410 310,500 390,600 460,690 450,680 470,800 520,924M0,600 60,670 135,790 240,924M135,790 40,890M390,600 480,545 590,450M580,40 620,150M830,9 850,80 880,150 940,195'],
        ['#fff', 9, 'M590,450 690,425 830,435 1030,400M780,430 850,470 845,560 830,620 870,700 880,775M460,690 620,670 620,500 570,490M910,790V924M730,810 790,880 800,924M520,195 580,310 480,370M580,830 700,890 670,924'],
        ['#fff', 5, 'M130,90 210,190 300,310M0,350 90,490M50,660 260,510 400,430M130,520 180,600M220,540 280,670M300,310 410,450 500,540M360,310 460,430M430,260 540,360M310,480 520,340M620,590 550,640M590,820 630,740M640,290 700,360 780,390M720,100 800,130M740,350 790,270M480,850 640,924M330,850H480M450,770H330M385,775V924M415,775V924'],
        ['#999', 4, 'M112,235 235,140 255,160 130,252ZM315,255 350,240 355,250 320,265Z'],
        ['#9d718f', 5, 'M668,12 670,40 720,62 760,45 760,9'],
        ['#e0c48f', 19, 'M0,185 30,163 135,90 230,35 280,9'], ['#fcd6a4', 15, 'M0,185 30,163 135,90 230,35 280,9'],
        ['#d4d392', 20, 'M270,9 310,55 350,130 380,200 410,250 500,320 540,390 590,450 635,530 640,600 640,680 680,775'],
        ['#f3f3a0', 17, 'M270,9 310,55 350,130 380,200 410,250 500,320 540,390 590,450 635,530 640,600 640,680 680,775'],
        ['#e39a80', 19, 'M500,924 600,840 680,790 870,785 930,770 1030,725'], ['#f9b29c', 16, 'M500,924 600,840 680,790 870,785 930,770 1030,725'],
        ['#777', 12, 'M0,770 60,850 100,924'], ['#f9b29c', 15, 'M0,790 50,860 90,924'],
        ['#fff', 7, 'M380,597a12,12 0 1,0 24,0a12,12 0 1,0 -24,0M192,412a8,8 0 1,0 16,0a8,8 0 1,0 -16,0']
      ],
      labels: [
        [222, 207, 'Central Milton', 24, '#999', 0, 160], [222, 239, 'Keynes', 24, '#999', 0, 80], [112, 299, 'Milton Keynes', 25, '#333', 0, 172],
        [466, 46, 'Campbell', 19, '#6b9b5a', 0, 76, 1], [466, 67, 'Park', 19, '#6b9b5a', 0, 36, 1], [873, 71, 'Miniature', 19, '#4747bd', 0, 86], [873, 93, 'Train', 19, '#4747bd', 0, 46],
        [915, 122, 'The Park', 18, '#4d8060', 0, 60], [915, 143, 'Plantation', 18, '#4d8060', 0, 70], [755, 247, 'Woolstone', 24, '#999', 0, 120], [602, 306, 'Springfield', 24, '#999', 0, 124],
        [985, 315, 'Oakgrove', 24, '#999', 0, 108], [384, 437, 'Fishermead', 24, '#999', 0, 136], [672, 504, 'Peartree Bridge', 24, '#999', 0, 180], [187, 625, 'Oldbrook', 24, '#999', 0, 106],
        [962, 545, 'Ouzel Valley', 22, '#4d9060', 0, 112, 1], [962, 569, 'Park', 22, '#4d9060', 0, 44, 1], [1022, 525, 'Monkston', 24, '#999', 0, 96],
        [845, 623, 'Woughton', 24, '#999', 0, 120], [845, 655, 'on the Green', 24, '#999', 0, 150], [540, 665, 'Eaglestone', 24, '#999', 0, 126], [534, 698, 'Eaglestone', 18, '#777', 0, 100, 1],
        [478, 793, 'Eaglestone', 24, '#999', 0, 126], [478, 825, 'West', 24, '#999', 0, 56], [888, 863, 'Woughton', 24, '#888', 0, 120], [888, 894, 'Park', 24, '#888', 0, 48], [988, 911, 'Ouzel Valley', 20, '#4d9060', 0, 80, 1],
        [22, 727, 'Winterhill', 24, '#999', 0, 118], [78, 130, 'H5 Portway', 16, '#5b3f1c', -34, 95], [370, 300, 'H6 Childs Way', 17, '#444', -34, 105], [582, 182, 'H6 Childs Way', 17, '#444', -22, 105],
        [345, 550, 'V7 Saxon Street', 17, '#555', 43, 112], [537, 520, 'Marlborough Drive', 16, '#444', -37, 90], [205, 740, 'H7 Chaffron Way', 17, '#555', -37, 125], [838, 555, 'Newport Road', 17, '#555', 100, 110],
        [975, 752, 'H8 Standing Way', 17, '#8b3a2a', -27, 110], [415, 880, 'Garraways', 17, '#444', -90, 82], [184, 94, 'P', 27, '#2a8ae0', 0, 15], [76, 170, 'P', 27, '#2a8ae0', 0, 15], [267, 340, 'P', 27, '#2a8ae0', 0, 15]
      ],
      shields: [[296, 87, 68, 28, 'B4034', '#f1f2c0', '#5b5b2c'], [659, 775, 56, 28, 'A421', '#f6b4a4', '#6b2620']]
    }
  ];

  // Built-up sheets draw industrial and retail land with their buildings.
  const built = { '#ebdbe8': 'url(#ind)', '#f4dddd': 'url(#com)' };
  const ground = (sheet, fill) => (sheet.x && built[fill]) || fill;

  const route = [
    [0, 'M1028,924 980,850 935,790 Q905,750 940,715 L1020,665 1086,615'],
    [1074, 'M0,625 48,580 Q60,568 45,552 L5,522 35,420 70,385 Q90,350 100,295 L120,240 Q130,220 155,200 L200,175 240,130 305,95 341,60 355,90 378,108 380,200 373,240 Q378,268 400,268 L447,256 530,360 560,410 650,510 672,568 Q676,578 690,576 L735,570 752,577 790,505 880,425 945,350 990,328 1030,293 1090,335'],
    [2154, 'M0,330 20,340 150,435 228,487 Q262,475 272,490 Q285,520 260,530 L235,545 205,585 175,640 165,675 M150,670 125,738'],
    [2154, 'M150,670 175,678 168,710 Q185,735 215,748 L235,785 260,782 280,765 312,794'],
    [2154, 'M280,765 320,695 370,630 390,590 405,598 415,560 450,535 480,500 535,495 565,481 615,507 675,508 722,468 Q738,465 740,490 L800,535 830,540 880,580 930,630 935,670 1000,730 1040,790 1047,840 1035,858 1065,890 1080,924'],
    [3204, 'M-50,790 -5,840 -12,862 20,890 36,924']
  ];
</script>

{#snippet icon(name, size = 19.2)}
  <svg class="icon" viewBox="0 0 24 24" width={size} height={size}><path d={P[name]} /></svg>
{/snippet}

<div class="app">
  <nav class="side">
    <header class="user">
      <div class="avatar">TT</div>
      <div class="name">Toby Twigger</div>
    </header>
    {#each nav as group}
      <section>
        <h3>{group.title}</h3>
        {#each group.items as [label, ic, active]}
          <a class="item" class:active href="#{ic}">{@render icon(ic)}<span>{label}</span></a>
        {/each}
      </section>
    {/each}
  </nav>

  <main>
    <div class="toolbar">
      <h1>Lunch Ride</h1>
      <button class="more" aria-label="More">{@render icon('dots')}</button>
    </div>
    <div class="panel">
      <div class="tabs">
        {#each tabs as [label, ic], i}
          <div class="tab" class:on={i === 0}>{@render icon(ic)}<span>{label}</span></div>
        {/each}
      </div>
      <div class="content">
        <div class="facts">
          <div class="fact">{@render icon('calendar')}<span>11/03/2023 12:35:58</span></div>
          <div class="fact loop">
            {@render icon('pin')}<span>Loop from</span>
            <span class="chip">{@render icon('pin')}Milton Keynes, City of Milton Keynes</span>
          </div>
        </div>
        <div class="stats">
          {#each stats as [ic, vals]}
            <div class="stat">
              {@render icon(ic)}
              {#each vals as [v, l]}
                <div class="val"><b>{v}</b><small>{l}</small></div>
              {/each}
            </div>
          {/each}
        </div>
      </div>
      <div class="map">
        <svg class="tiles" viewBox="0 9 4227 915" preserveAspectRatio="none">
          <defs>
            <pattern id="st1" width="84" height="66" patternUnits="userSpaceOnUse" patternTransform="rotate(-33)">
              <rect width="84" height="66" fill="#dfdede" />
              <path d="M8,8h20v8h-20zM36,8h12v9h-12zM62,28h11v22h-11zM8,44h26v6h-26z" fill="#d9d2ce" />
              <path d="M0,0H84M0,0V66M0,34H52M52,0V66M26,34V66" stroke="#f3f3f3" stroke-width="3.500" fill="none" />
            </pattern>
            <pattern id="st2" width="116" height="96" patternUnits="userSpaceOnUse" patternTransform="rotate(38)">
              <rect width="116" height="96" fill="#dedddd" />
              <path d="M10,14h9v18h-9zM44,20h24v8h-24zM84,60h14v9h-14zM12,64h22v8h-22z" fill="#d8cfcd" />
              <path d="M0,0Q58,14 116,0M0,0V96M0,50Q36,40 70,52T116,50M66,6Q72,50 66,52M34,46V96M92,54V96" stroke="#f3f3f3" stroke-width="3.500" fill="none" />
            </pattern>
            <pattern id="st3" width="46" height="54" patternUnits="userSpaceOnUse" patternTransform="rotate(-34)">
              <rect width="46" height="54" fill="#e2e0e0" />
              <rect x="9" y="9" width="28" height="36" rx="5" fill="#d6cdc8" /><rect x="16" y="16" width="14" height="22" fill="#cae8ba" />
              <path d="M0,0H46M0,0V54" stroke="#f8f8f8" stroke-width="5" />
            </pattern>
            <pattern id="ind" width="98" height="88" patternUnits="userSpaceOnUse" patternTransform="rotate(30)">
              <rect width="98" height="88" fill="#e8dbe5" />
              <path d="M10,10h26v22h-26zM44,12h14v26h-14zM68,10h22v16h-22zM12,54h18v24h-18zM40,56h30v20h-30zM80,44h10v32h-10z" fill="#d5c6c3" />
              <path d="M0,0H98M0,46H74M74,32V88M0,0V88" stroke="#f5f2f4" stroke-width="4" fill="none" />
            </pattern>
            <pattern id="com" width="80" height="62" patternUnits="userSpaceOnUse" patternTransform="rotate(-33)">
              <rect width="80" height="62" fill="#eedddc" />
              <path d="M8,8h26v18h-26zM46,8h24v14h-24zM10,38h14v14h-14zM32,38h32v12h-32z" fill="#dbcbc6" />
              <path d="M8,31H70" stroke="#e9bcb9" stroke-width="3" stroke-dasharray="12 8" />
              <path d="M0,0H80M0,0V62M40,0V32" stroke="#f6f3f3" stroke-width="5" fill="none" />
            </pattern>
          </defs>
          <rect y="9" width="4227" height="915" fill="#edf0d5" />
          {#each sheets as s}
            <g transform="translate({s.x} 0)">
              {#each s.areas as [fill, points]}<polygon fill={ground(s, fill)} {points} />{/each}
            </g>
          {/each}
          {#each sheets as s}
            <g transform="translate({s.x} 0)" fill="none" stroke-linejoin="round">
              {#each s.lines as [stroke, w, d, dash]}<path {stroke} stroke-width={w} {d} stroke-dasharray={dash} />{/each}
            </g>
          {/each}
          {#each sheets as s}
            <g transform="translate({s.x} 0)">
              {#each s.labels as [x, y, t, size, fill, rot, len, it]}
                <text {x} {y} {fill} font-size={size} textLength={len} lengthAdjust="spacingAndGlyphs" transform="rotate({rot} {x} {y - 6})" font-style={it ? 'italic' : 'normal'}>{t}</text>
              {/each}
              {#each s.shields as [x, y, w, h, t, fill, ink]}
                <rect {x} {y} width={w} height={h} rx="4" {fill} stroke="#d9b48c" stroke-width="2" />
                <text class="ref" x={x + w / 2} y={y + 21} font-size="19" fill={ink}>{t}</text>
              {/each}
            </g>
          {/each}
          <g fill="none" stroke="#888" stroke-width="18" stroke-linecap="round" stroke-linejoin="round">
            {#each route as [dx, d]}<path transform="translate({dx} 0)" {d} />{/each}
          </g>
        </svg>
        <div class="controls">
          <div class="zoom">
            <button aria-label="Zoom in"><svg viewBox="0 0 24 24" width="23" height="23"><path d="M12 8v8M8 12h8" stroke="#222" stroke-width="2.200" stroke-linecap="round" /></svg></button>
            <button aria-label="Zoom out"><svg viewBox="0 0 24 24" width="23" height="23"><path d="M8 12h8" stroke="#222" stroke-width="2.200" stroke-linecap="round" /></svg></button>
          </div>
          <button class="full" aria-label="Fullscreen">
            <svg viewBox="0 0 16 16" width="16" height="16"><path d="M.5.5H6L4.300 2.200 7 4.900 4.900 7 2.200 4.300.5 6ZM15.500.5V6L13.800 4.300 11.100 7 9 4.900 11.700 2.200 10 .5ZM.5 15.500V10L2.200 11.700 4.900 9 7 11.100 4.300 13.800 6 15.500ZM15.500 15.500H10L11.700 13.800 9 11.100 11.100 9 13.800 11.700 15.500 10Z" fill="#222" /></svg>
          </button>
        </div>
      </div>
    </div>
  </main>
</div>

<style>
  :global(body) { background: #121212; overflow: hidden; }
  .app { display: flex; width: 1852px; height: 898px; overflow: hidden; background: #121212; color: #fff; font-family: Roboto, sans-serif; }
  .icon { fill: currentColor; flex: none; display: block; }
  button { border: 0; padding: 0; background: none; color: inherit; display: grid; place-items: center; }
  .side { box-sizing: border-box; width: 206px; margin-left: 1px; flex: none; height: 898px; background: #363636; border: solid #545454; border-width: 0 1px; }
  .user { height: 84px; box-sizing: border-box; padding-top: 1px; }
  .avatar { width: 32px; height: 32px; margin-left: 80px; border-radius: 50%; background: #2196f3; font-size: 16px; line-height: 31px; text-align: center; }
  .name { font-size: 16px; font-weight: 500; line-height: 20px; margin-top: 16px; padding-left: 1px; text-align: center; letter-spacing: .2px; }
  section { border-top: 1px solid #545454; padding-bottom: 6.400px; }
  h3 { margin: 0; height: 32px; line-height: 32px; padding-left: 12.800px; font-size: 9.600px; font-weight: 400; color: #b4b4b4; }
  .item { display: flex; align-items: center; gap: 25.300px; height: 32px; margin: 0 6px; padding-left: 6.700px; border-radius: 3px; font-size: 10.400px; font-weight: 500; color: #fff; text-decoration: none; }
  .item.active { background: #314d63; color: #2196f3; }
  main { flex: 1; min-width: 0; padding-top: 4px; }
  .toolbar { margin-left: 16px; margin-right: 1px; height: 51px; background: #272727; box-shadow: 0 2px 4px rgba(0, 0, 0, .5); display: flex; align-items: center; }
  h1 { flex: 1; margin: 0; padding-left: 3px; text-align: center; font-size: 16px; font-weight: 400; }
  .more { width: 32px; padding-right: 18px; }
  .panel { margin: 20px 0 0 9px; height: 823px; background: #1e1e1e; overflow: hidden; }
  .tabs { display: grid; grid-template-columns: 423px 419px 407px 393px; height: 57px; }
  .tab { box-sizing: border-box; padding-top: 9px; display: flex; flex-direction: column; align-items: center; gap: 6px; font-size: 11.200px; font-weight: 500; letter-spacing: 1px; line-height: 14px; text-transform: uppercase; color: #a5a5a5; border-bottom: 1px solid transparent; }
  .tab.on { color: #2196f3; border-color: #2196f3; }
  .content { display: grid; grid-template-columns: 843px 1fr; height: 461px; }
  .facts { padding: 18px 0 0 13px; font-size: 12.800px; }
  .fact { display: flex; align-items: center; height: 20px; }
  .fact > span { margin-left: 25.500px; }
  .loop { margin-top: 20px; height: 44px; }
  .loop > :global(svg) { margin-bottom: 13px; }
  .fact .chip { margin-left: 10px; display: flex; align-items: center; height: 26px; box-sizing: border-box; padding: 0 9.600px; border-radius: 13px; background: #4caf50; font-size: 11.200px; }
  .stats { padding-top: 19px; }
  .stat { display: grid; grid-template-columns: 45px 247px 247px 200px; height: 57.600px; color: #3f51b5; }
  .val { display: flex; flex-direction: column; padding-top: 2px; }
  .val b { color: #fff; font-size: 10.400px; font-weight: 500; line-height: 15px; }
  .val small { color: #b0b0b0; font-size: 10.400px; line-height: 14px; }
  .map { position: relative; width: 1409px; height: 305px; margin-left: 116px; overflow: hidden; background: #edf0d5; }
  .tiles { display: block; width: 1409px; height: 305px; }
  .tiles text { font-family: "Noto Sans", sans-serif; text-anchor: middle; paint-order: stroke; stroke: #fff; stroke-opacity: .6; stroke-width: 4px; }
  .tiles .ref { stroke: none; }
  .controls { position: absolute; top: 8px; right: 8px; display: grid; gap: 8px; }
  .zoom, .full { width: 23px; background: #fff; border-radius: 3px; box-shadow: 0 0 0 1px rgba(0, 0, 0, .1); }
  .zoom button { width: 23px; height: 23px; }
  .zoom button + button { border-top: 1px solid #ccc; }
  .full { height: 23px; }
</style>
